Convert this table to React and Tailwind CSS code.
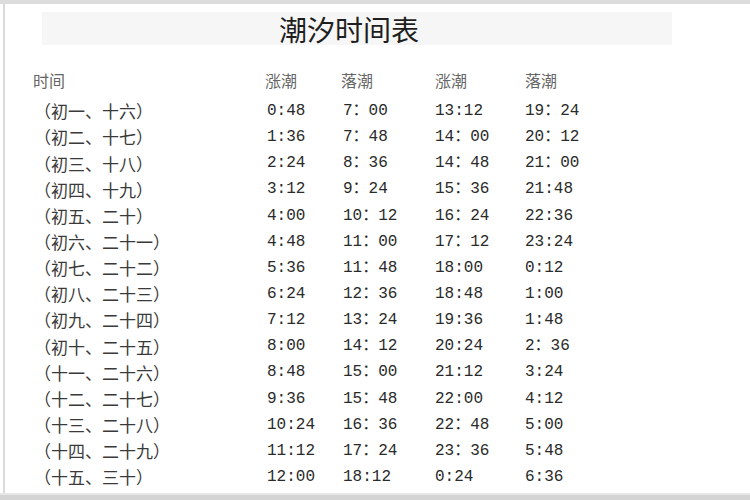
const rows = [
  ['（初一、十六）', '0:48', '7：00', '13:12', '19：24'],
  ['（初二、十七）', '1:36', '7：48', '14：00', '20：12'],
  ['（初三、十八）', '2:24', '8：36', '14：48', '21：00'],
  ['（初四、十九）', '3:12', '9：24', '15：36', '21:48'],
  ['（初五、二十）', '4:00', '10：12', '16：24', '22:36'],
  ['（初六、二十一）', '4:48', '11：00', '17：12', '23:24'],
  ['（初七、二十二）', '5:36', '11：48', '18:00', '0:12'],
  ['（初八、二十三）', '6:24', '12：36', '18:48', '1:00'],
  ['（初九、二十四）', '7:12', '13：24', '19:36', '1:48'],
  ['（初十、二十五）', '8:00', '14：12', '20:24', '2：36'],
  ['（十一、二十六）', '8:48', '15：00', '21:12', '3:24'],
  ['（十二、二十七）', '9:36', '15：48', '22:00', '4:12'],
  ['（十三、二十八）', '10:24', '16：36', '22：48', '5:00'],
  ['（十四、二十九）', '11:12', '17：24', '23：36', '5:48'],
  ['（十五、三十）', '12:00', '18:12', '0:24', '6:36'],
]

const gridCols = 'grid grid-cols-[232px_76px_94px_90px_1fr]'

export default function App() {
  return (
    <div className="flex h-[500px] w-[750px] flex-col overflow-hidden bg-white font-['Liberation_Mono','Noto_Sans_CJK_SC',monospace]">
      <div className="h-[4px] bg-[#dcdcdc]" />
      <div className="ml-[3px] flex flex-1 flex-col border-l-2 border-[#dadada]">
        <div className="ml-[37px] mt-[8px] flex h-[33px] w-[630px] items-center justify-center bg-[#f6f6f6] pr-[16px]">
          <h1 className="font-['Noto_Sans_CJK_SC',sans-serif] text-[28px] leading-none text-[#1e1e1e]">潮汐时间表</h1>
        </div>

        <div className={`${gridCols} mt-[22px] h-[26px] items-center pl-[28px] font-['Noto_Sans_CJK_SC',sans-serif] text-[16px] text-[#666]`}>
          <span>时间</span>
          <span>涨潮</span>
          <span>落潮</span>
          <span>涨潮</span>
          <span>落潮</span>
        </div>

        <div className="mt-[5px] flex flex-col">
          {rows.map((row) => (
            <div className={`${gridCols} h-[26.15px] items-center pl-[28px] text-[16px] text-[#2a2a2a]`} key={row[0]}>
              <span className="pl-[1px] font-['Noto_Sans_CJK_SC',sans-serif] text-[17px] text-[#3a3a3a]">{row[0]}</span>
              <span className="pl-[2px]">{row[1]}</span>
              <span className="pl-[2px]">{row[2]}</span>
              <span>{row[3]}</span>
              <span>{row[4]}</span>
            </div>
          ))}
        </div>
      </div>
      <div className="h-[2px] bg-[#e8e8e8]" />
      <div className="h-[5px] bg-[#d4d4d4]" />
    </div>
  )
}
